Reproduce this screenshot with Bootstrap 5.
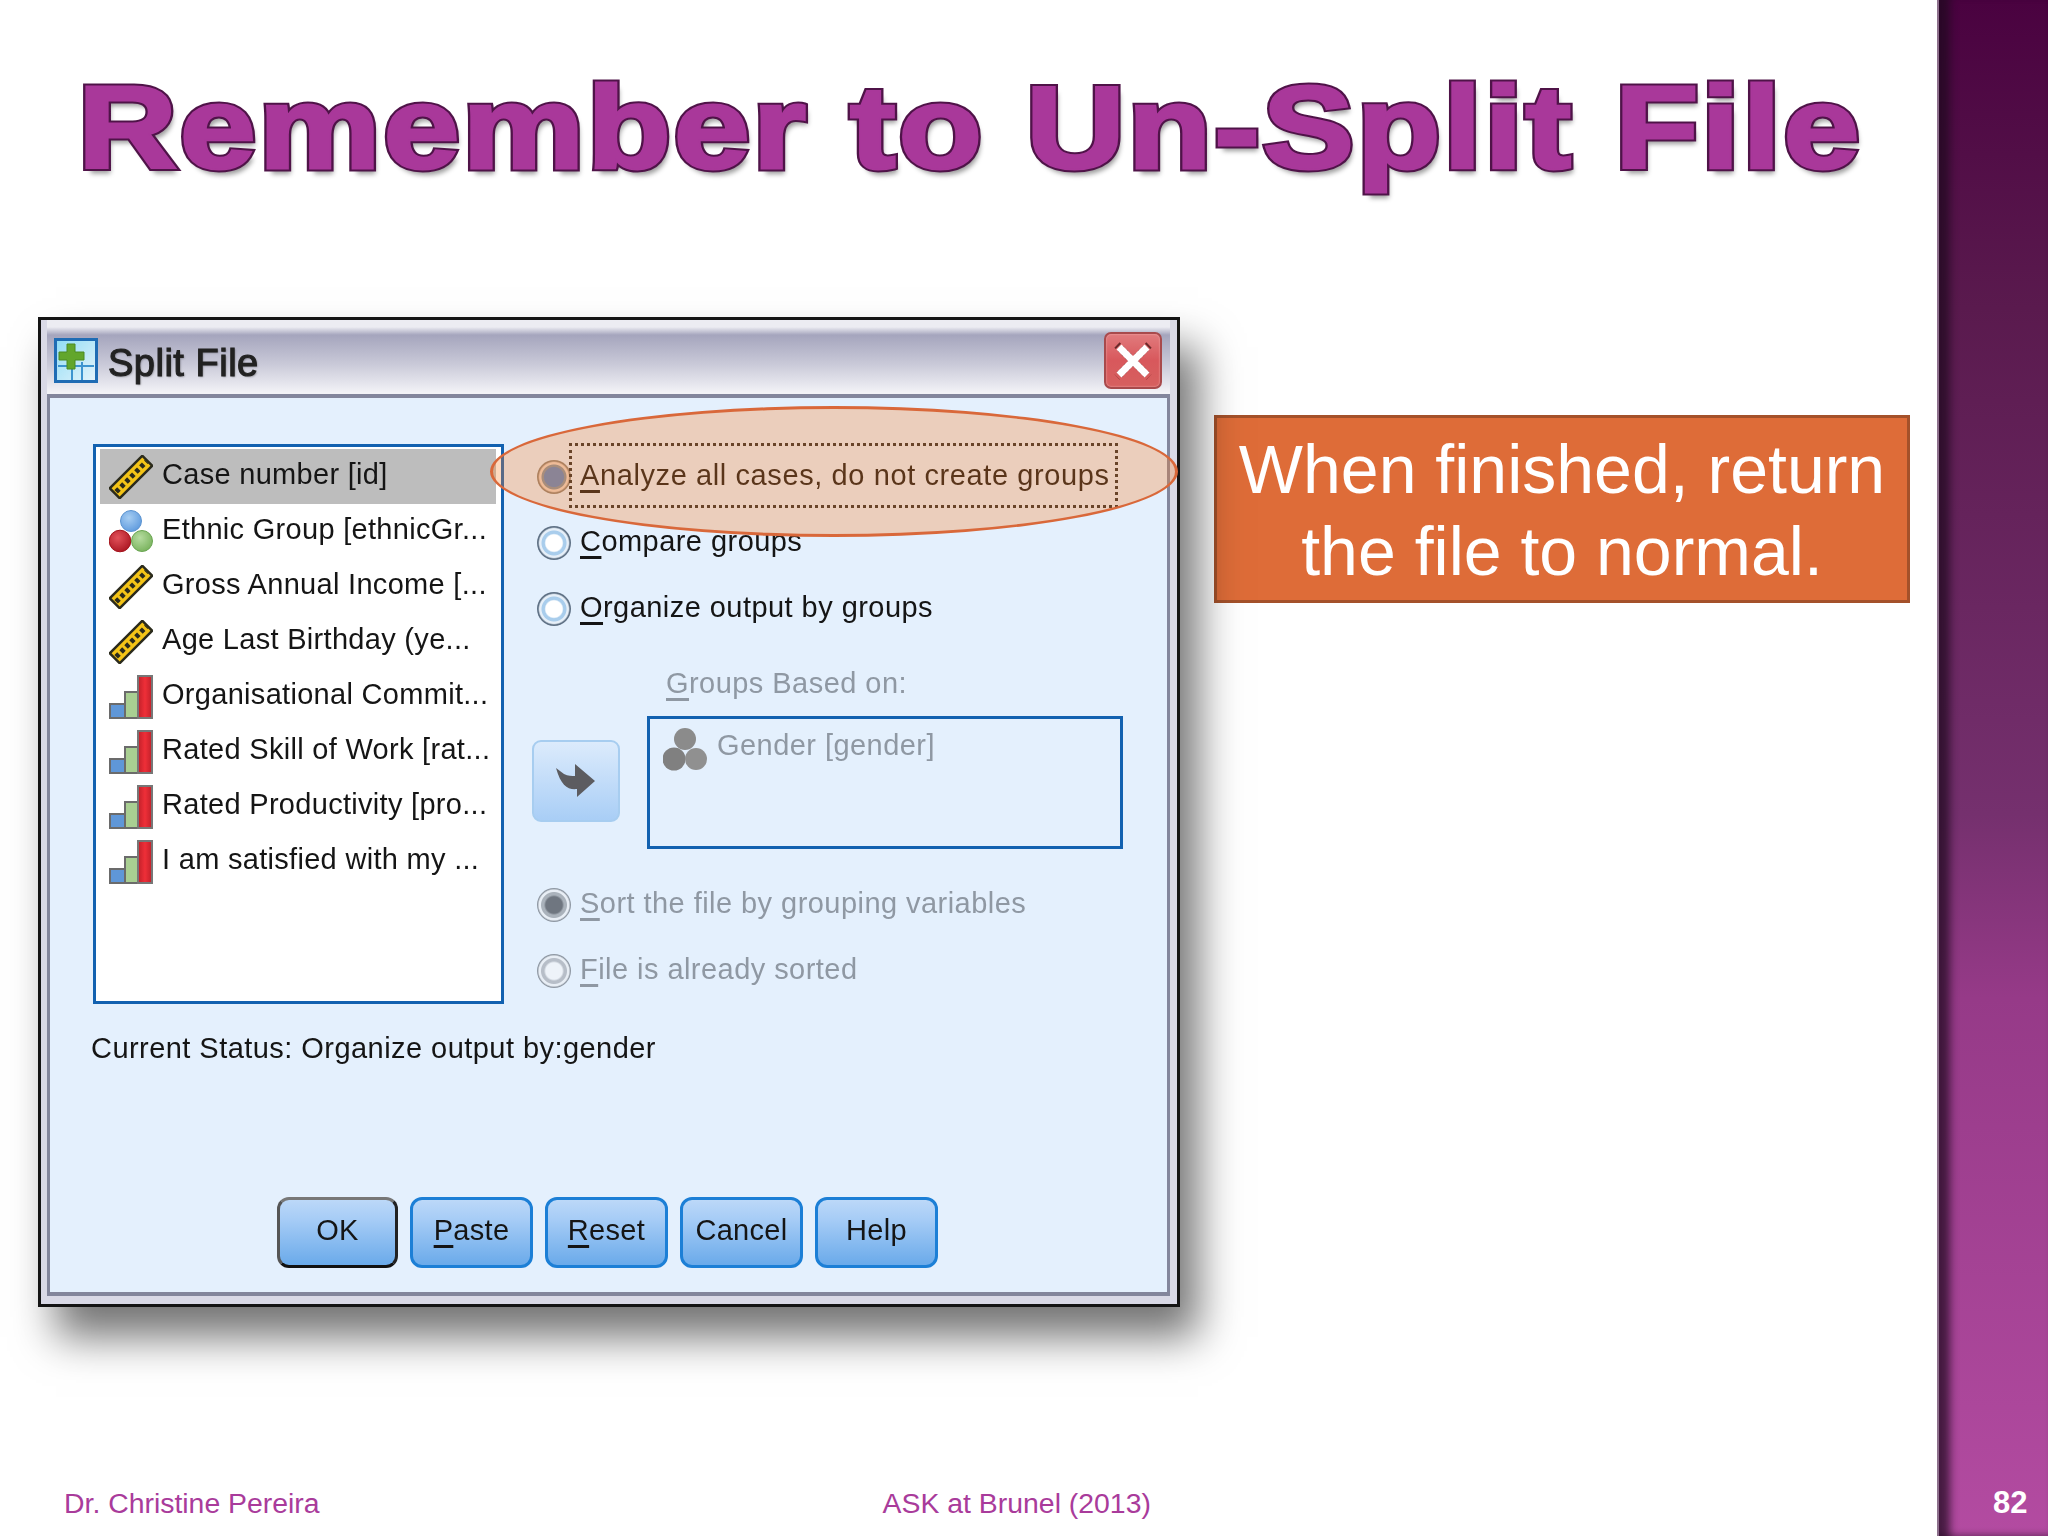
<!DOCTYPE html>
<html lang="en">
<head>
<meta charset="utf-8">
<title>Remember to Un-Split File</title>
<link href="https://cdn.jsdelivr.net/npm/bootstrap@5.3.0/dist/css/bootstrap.min.css" rel="stylesheet">
<style>
html,body{margin:0;background:#fff;font-family:"Liberation Sans",Arial,sans-serif}
.slide-page{width:2048px;height:1536px;overflow:hidden}
.slide-main{width:1937px;height:1536px}
.slide-rail{width:111px;height:1536px;background:linear-gradient(180deg,#4a0240 0%,#5a1a4e 20%,#75306e 53%,#963a88 65%,#b34ba1 100%);box-shadow:inset 17px 0 8px -6px rgba(30,10,30,.72),inset 0 -6px 6px -4px rgba(30,10,30,.35);border-left:2px solid #8d6f8c;color:#fff;font-weight:700;font-size:31px;padding-bottom:15px;padding-left:54px;line-height:36px}
.slide-title{margin:0;padding:69px 0 0 78px;font-size:117px;line-height:1;font-weight:700;white-space:nowrap;letter-spacing:2.5px;font-family:"Liberation Sans",Arial,sans-serif;height:189px}
.title-ink{display:inline-block;position:relative;transform:scaleX(1.17);transform-origin:left top;color:#a9389a;-webkit-text-stroke:7px #4f1348;text-shadow:3px 6px 5px rgba(0,0,0,.4)}
.title-ink::after{content:attr(data-ink);position:absolute;left:0;top:0;-webkit-text-stroke:3px #a9389a;text-shadow:none;paint-order:stroke fill}
.stage-row{margin-top:128px;padding-left:38px}
.spss-dlg{width:1142px;height:990px;border:3px solid #141414;background:#d9d9e6;padding:0 7px 0 6px;box-shadow:18px 30px 40px rgba(0,0,0,.55);filter:blur(.5px)}
.spss-bar{height:74px;background:linear-gradient(180deg,#ececf2 0,#ececf2 7px,#a5a5bd 15px,#c9c9d8 44px,#f3f3f7 73px);padding:7px 0 0 7px;gap:10px}
.spss-heading{font-size:38px;letter-spacing:.5px;color:#222;-webkit-text-stroke:1.1px #222;text-shadow:1px 1px 2px rgba(0,0,0,.35);line-height:1;margin-top:4px}
.spss-close{width:58px;height:57px;margin-left:auto;margin-right:8px;border:2px solid #a84a4c;border-radius:7px;background:linear-gradient(180deg,#e17b7d 0,#d8585c 50%,#d6605f 100%);box-shadow:inset 0 0 2px #f5b5b5}
.spss-panel{height:902px;border:solid #83869c;border-width:4px 3px;background:#e4f0fd;padding:46px 0 0 43px;color:#151515;font-size:29px;line-height:35px;letter-spacing:.45px}
.var-list{width:411px;height:560px;border:3px solid #1261b0;background:#fff;padding:2px 5px 0 4px;letter-spacing:.3px}
.var-row{height:55px;padding-left:9px;gap:9px;white-space:nowrap}
.var-row.is-sel{background:#bdbdbd}
.var-row svg{width:44px;height:44px;flex:none}
.var-row span{margin-bottom:5px}
.opt-col{margin-left:33px}
.opt-row{height:66px;gap:9px;white-space:nowrap}
.opt-row>span:last-child{margin-bottom:4px}
.opt-dot{width:34px;height:34px;flex:none;border-radius:50%;margin-bottom:1px;background:radial-gradient(circle,#fff 0 34%,#a9cdec 40% 50%,#e6eff8 54% 60%,#5f7185 66% 84%,#c5d0dc 92%)}
.opt-dot.is-on{background:radial-gradient(circle,#5b86c4 0 40%,#85929f 44% 50%,#e8d4c8 54% 60%,#8d8176 66% 84%,#cfc4ba 92%)}
.opt-dot.off-on{background:radial-gradient(circle,#6f7680 0 34%,#aab2bb 42% 52%,#e8eef5 56% 62%,#8f98a3 68% 86%,#cfd6de 92%)}
.opt-dot.off{background:radial-gradient(circle,#eef3f9 0 34%,#b7bec8 42% 52%,#e8eef5 56% 62%,#8f98a3 68% 86%,#cfd6de 92%)}
.opt-focus{outline:3px dotted #2a2a2a;outline-offset:-1px;padding:13px 6px 13px 9px;margin-left:-9px;line-height:35px;letter-spacing:.6px}
.mute-txt{color:#8f98a3}
.u-key{text-decoration:underline;text-decoration-thickness:3px;text-underline-offset:5px}
.grp-label{margin:24px 0 0 129px;line-height:35px;height:36px}
.grp-row{margin-top:14px;margin-left:-5px}
.arrow-btn{width:88px;height:82px;padding:0;margin-bottom:3px;border:2px solid #a7cdf0;border-radius:9px;background:linear-gradient(180deg,#dcebfc,#a9cef6)}
.grp-box{width:476px;height:133px;margin-left:27px;border:3px solid #1261b0;padding:9px 0 0 13px;gap:10px}
.grp-box svg{width:44px;height:44px}
.sort-block{margin-top:23px}
.status-line{margin:27px 0 0 -2px;height:35px}
.btn-strip{margin:131px 0 0 184px;gap:12px}
.spss-btn{width:123px;height:71px;padding:0 0 5px;font-size:29px;line-height:35px;letter-spacing:.3px;color:#151515;border:3px solid #1c7fd6;border-radius:12px;background:linear-gradient(180deg,#bcd8f8 0,#a6ccf6 30%,#6aaaea 100%)}
.spss-btn:hover{color:#151515;background:linear-gradient(180deg,#bcd8f8 0,#a6ccf6 30%,#6aaaea 100%);border-color:#1c7fd6}
.spss-btn.is-default{width:121px;border-color:#777 #222 #111 #555}
.oval-mark{position:absolute;left:440px;top:8px;width:688px;height:131px;border-radius:50%;border:3.5px solid #d9683a;background:rgba(253,130,40,.3);pointer-events:none}
.note-box{width:696px;height:188px;margin:98px 0 0 34px;padding-top:2px;background:#de6c38;border:3px solid #a4512a;color:#fff;font-size:68px;line-height:82px;text-align:center}
.slide-foot{padding:0 0 15px 64px;color:#a93b9b;font-size:28.4px;line-height:35px}
.foot-mid{margin-left:563px}
</style>
</head>
<body>
<svg width="0" height="0" class="d-block" aria-hidden="true">
  <defs>
    <radialGradient id="gr-blue" cx=".4" cy=".35" r=".7"><stop offset="0" stop-color="#a6cdf2"/><stop offset="1" stop-color="#5e9ade"/></radialGradient>
    <radialGradient id="gr-red" cx=".4" cy=".35" r=".7"><stop offset="0" stop-color="#e2525a"/><stop offset="1" stop-color="#ab1622"/></radialGradient>
    <radialGradient id="gr-green" cx=".4" cy=".35" r=".7"><stop offset="0" stop-color="#b6dca0"/><stop offset="1" stop-color="#78b25c"/></radialGradient>
    <linearGradient id="gr-redbar" x1="0" x2="1" y1="0" y2="0"><stop offset="0" stop-color="#c0202a"/><stop offset=".5" stop-color="#ef2f38"/><stop offset="1" stop-color="#c0202a"/></linearGradient>
  </defs>
  <symbol id="ic-ruler" viewBox="0 0 44 44">
    <g transform="rotate(-45 22 22)">
      <rect x="-1" y="15" width="46" height="14" fill="#f4c417" stroke="#2b2b1c" stroke-width="2.5"/>
      <path d="M1 22H44" stroke="#2b2b1c" stroke-width="5" stroke-dasharray="4 3"/>
    </g>
  </symbol>
  <symbol id="ic-nominal" viewBox="0 0 44 44">
    <circle cx="22" cy="11" r="10.5" fill="url(#gr-blue)" stroke="#5b93d0"/>
    <circle cx="11" cy="31" r="10.8" fill="url(#gr-red)" stroke="#a5141c"/>
    <circle cx="33" cy="31" r="10.5" fill="url(#gr-green)" stroke="#6aa552"/>
  </symbol>
  <symbol id="ic-nominal-off" viewBox="0 0 44 44">
    <circle cx="22" cy="11" r="11" fill="#8b8b8b"/>
    <circle cx="11" cy="31" r="11.5" fill="#808080"/>
    <circle cx="33" cy="31" r="11" fill="#909090"/>
  </symbol>
  <symbol id="ic-bars" viewBox="0 0 44 44">
    <rect x="1" y="29" width="15" height="14" fill="#5f97d8" stroke="#6b6b6b" stroke-width="2"/>
    <rect x="16" y="17" width="13" height="26" fill="#a9cf92" stroke="#6b6b6b" stroke-width="2"/>
    <rect x="29" y="1" width="14" height="42" fill="url(#gr-redbar)" stroke="#777" stroke-width="2"/>
  </symbol>
</svg>
<div class="slide-page d-flex">
  <div class="slide-main d-flex flex-column">
    <h1 class="slide-title"><span class="title-ink" data-ink="Remember to Un-Split File">Remember to Un-Split File</span></h1>
    <div class="stage-row d-flex align-items-start">
      <div class="spss-dlg">
        <div class="spss-bar d-flex align-items-center">
          <svg width="44" height="45" viewBox="0 0 44 45" aria-hidden="true">
            <defs><linearGradient id="gr-cell" x1="0" x2="1" y1="0" y2="1"><stop offset="0" stop-color="#8fdcf5"/><stop offset="1" stop-color="#e6f4fb"/></linearGradient></defs>
            <rect x="1.5" y="1.5" width="41" height="42" fill="url(#gr-cell)" stroke="#1f6cb4" stroke-width="3"/>
            <path d="M4 28H40M18 24V42M28 24V42" stroke="#3d94cf" stroke-width="2"/>
            <path d="M13 6h8v8h9v8h-9v9h-8v-9H5v-8h8z" fill="#62a62c" stroke="#4a8a22"/>
          </svg>
          <span class="spss-heading">Split File</span>
          <span class="spss-close d-flex align-items-center justify-content-center">
            <svg width="38" height="38" viewBox="0 0 38 38" aria-hidden="true"><path d="M3 3L35 35M35 3L3 35" stroke="#6b2a2a" stroke-width="7.5" stroke-dasharray="2 3"/><path d="M5 5L33 33M33 5L5 33" stroke="#fff" stroke-width="7"/></svg>
          </span>
        </div>
        <div class="spss-panel position-relative">
          <div class="d-flex">
            <div class="var-list">
              <div class="var-row is-sel d-flex align-items-center"><svg><use href="#ic-ruler"/></svg><span>Case number [id]</span></div>
              <div class="var-row d-flex align-items-center"><svg><use href="#ic-nominal"/></svg><span>Ethnic Group [ethnicGr...</span></div>
              <div class="var-row d-flex align-items-center"><svg><use href="#ic-ruler"/></svg><span>Gross Annual Income [...</span></div>
              <div class="var-row d-flex align-items-center"><svg><use href="#ic-ruler"/></svg><span>Age Last Birthday (ye...</span></div>
              <div class="var-row d-flex align-items-center"><svg><use href="#ic-bars"/></svg><span>Organisational Commit...</span></div>
              <div class="var-row d-flex align-items-center"><svg><use href="#ic-bars"/></svg><span>Rated Skill of Work [rat...</span></div>
              <div class="var-row d-flex align-items-center"><svg><use href="#ic-bars"/></svg><span>Rated Productivity [pro...</span></div>
              <div class="var-row d-flex align-items-center"><svg><use href="#ic-bars"/></svg><span>I am satisfied with my ...</span></div>
            </div>
            <div class="opt-col">
              <div class="opt-row d-flex align-items-center"><span class="opt-dot is-on"></span><span class="opt-focus"><span class="u-key">A</span>nalyze all cases, do not create groups</span></div>
              <div class="opt-row d-flex align-items-center"><span class="opt-dot"></span><span><span class="u-key">C</span>ompare groups</span></div>
              <div class="opt-row d-flex align-items-center"><span class="opt-dot"></span><span><span class="u-key">O</span>rganize output by groups</span></div>
              <div class="grp-label mute-txt"><span class="u-key">G</span>roups Based on:</div>
              <div class="grp-row d-flex align-items-center">
                <button type="button" class="arrow-btn d-flex align-items-center justify-content-center" disabled aria-label="Move">
                  <svg width="40" height="34" viewBox="0 0 40 34" aria-hidden="true"><path d="M0 4L8 10C12 12 16 12 19 12V0L39 17 21 33V25C12 26 5 22 0 4z" fill="#5c5c60"/></svg>
                </button>
                <div class="grp-box mute-txt d-flex align-items-start"><svg><use href="#ic-nominal-off"/></svg><span>Gender [gender]</span></div>
              </div>
              <div class="sort-block">
                <div class="opt-row d-flex align-items-center mute-txt"><span class="opt-dot off-on"></span><span><span class="u-key">S</span>ort the file by grouping variables</span></div>
                <div class="opt-row d-flex align-items-center mute-txt"><span class="opt-dot off"></span><span><span class="u-key">F</span>ile is already sorted</span></div>
              </div>
            </div>
          </div>
          <div class="status-line">Current Status: Organize output by:gender</div>
          <div class="btn-strip d-flex">
            <button type="button" class="btn spss-btn is-default">OK</button>
            <button type="button" class="btn spss-btn"><span class="u-key">P</span>aste</button>
            <button type="button" class="btn spss-btn"><span class="u-key">R</span>eset</button>
            <button type="button" class="btn spss-btn">Cancel</button>
            <button type="button" class="btn spss-btn">Help</button>
          </div>
          <div class="oval-mark"></div>
        </div>
      </div>
      <div class="note-box d-flex align-items-center justify-content-center">When finished, return<br>the file to normal.</div>
    </div>
    <div class="slide-foot mt-auto d-flex"><span>Dr. Christine Pereira</span><span class="foot-mid">ASK at Brunel (2013)</span></div>
  </div>
  <div class="slide-rail d-flex align-items-end">82</div>
</div>
<script src="https://cdn.jsdelivr.net/npm/bootstrap@5.3.0/dist/js/bootstrap.bundle.min.js"></script>
</body>
</html>
